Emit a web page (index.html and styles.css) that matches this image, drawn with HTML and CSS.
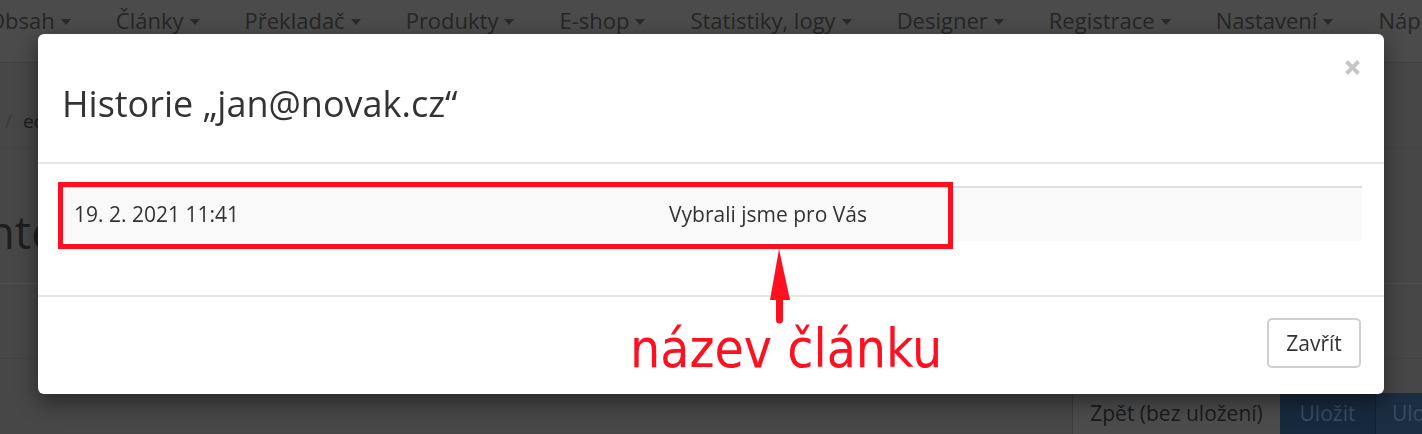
FILE: index.html
```html
<!DOCTYPE html>
<html lang="cs">
<head>
<meta charset="utf-8">
<title>Historie</title>
<link rel="stylesheet" href="styles.css">
</head>
<body>
<div class="page">
  <header class="topnav">
    <ul class="menu">
      <li class="menu-item">Obsah<span class="caret"></span></li>
      <li class="menu-item">Články<span class="caret"></span></li>
      <li class="menu-item">Překladač<span class="caret"></span></li>
      <li class="menu-item">Produkty<span class="caret"></span></li>
      <li class="menu-item">E-shop<span class="caret"></span></li>
      <li class="menu-item">Statistiky, logy<span class="caret"></span></li>
      <li class="menu-item">Designer<span class="caret"></span></li>
      <li class="menu-item">Registrace<span class="caret"></span></li>
      <li class="menu-item">Nastavení<span class="caret"></span></li>
      <li class="menu-item">Nápověda<span class="caret"></span></li>
    </ul>
  </header>
  <div class="crumbs"><span class="crumb-sep">/</span><span class="crumb">editace</span></div>
  <h1 class="heading">Content</h1>
  <div class="panel"></div>
  <div class="actionbar">
    <div class="actionbar-fill"></div>
    <button class="btn-back">Zpět (bez uložení)</button>
    <button class="btn-save">Uložit</button>
    <button class="btn-save btn-save-close">Uložit a zavřít</button>
  </div>
</div>

<div class="modal-layer">
  <div class="modal">
    <div class="modal-header">
      <h3 class="modal-title">Historie „jan@novak.cz“</h3>
      <button class="close" aria-label="Zavřít">
        <svg width="15" height="15" viewBox="0 0 15 15"><path d="M1.5 1.5 L13.5 13.5 M13.5 1.5 L1.5 13.5" stroke="#c6c6c6" stroke-width="4" fill="none"/></svg>
      </button>
    </div>
    <div class="modal-body">
      <div class="history">
        <div class="history-row">
          <div class="cell cell-date">19. 2. 2021 11:41</div>
          <div class="cell cell-title">Vybrali jsme pro Vás</div>
        </div>
      </div>
    </div>
    <div class="modal-footer">
      <button class="btn">Zavřít</button>
    </div>

    <div class="mark-box"></div>
    <svg class="mark-arrow" width="24" height="80" viewBox="0 0 24 80">
      <polygon points="11,2 2,53 22,53" fill="#ff1020"/>
      <line x1="11.5" y1="48" x2="11.5" y2="73" stroke="#ff1020" stroke-width="7" stroke-linecap="round"/>
    </svg>
    <div class="mark-label">název článku</div>
  </div>
</div>
</body>
</html>
```

FILE: styles.css
```css
html, body {
  margin: 0;
  padding: 0;
}

body {
  width: 1422px;
  height: 434px;
  overflow: hidden;
  background: #474747;
  font-family: "Open Sans", "Liberation Sans", sans-serif;
  color: #262626;
}

.page {
  display: flex;
  flex-direction: column;
  width: 1422px;
}

/* top navigation (dimmed behind the modal) */
.topnav {
  height: 62px;
  background: #4b4b4b;
  border-bottom: 1px solid #404040;
}

.menu {
  list-style: none;
  margin: 0 0 0 -12px;
  padding: 0;
  display: flex;
  gap: 45px;
  white-space: nowrap;
}

.menu-item {
  display: flex;
  align-items: center;
  font-size: 22px;
  line-height: 41px;
  color: #262626;
}

.caret {
  display: inline-block;
  margin-left: 6px;
  margin-top: 3px;
  width: 0;
  height: 0;
  border-top: 6px solid #2a2a2a;
  border-left: 5px solid transparent;
  border-right: 5px solid transparent;
}

.crumbs {
  display: flex;
  gap: 11px;
  padding: 46px 0 15px 5px;
  font-size: 19px;
  line-height: 24px;
  border-bottom: 1px solid #444444;
}

.crumb-sep {
  color: #3a3a3a;
}

.crumb {
  color: #1e1e1e;
}

.heading {
  margin: 0 0 0 -70px;
  padding: 52px 0 22px;
  font-size: 46px;
  line-height: 60px;
  font-weight: 400;
  color: #1e1e1e;
  border-bottom: 1px solid #525252;
}

.panel {
  height: 74px;
  border-bottom: 1px solid #434343;
}

.actionbar {
  margin-top: 34px;
  display: flex;
  height: 41px;
  width: 1560px;
}

.actionbar-fill {
  flex: 1;
}

.btn-back,
.btn-save {
  border: 0;
  margin: 0;
  font-family: "Open Sans", "Liberation Sans", sans-serif;
  font-size: 21px;
  height: 41px;
  line-height: 41px;
  padding: 0 16px;
}

.btn-back {
  background: #4c4c4c;
  color: #1b1b1b;
  border-left: 1px solid #3c3c3c;
  width: 208px;
}

.btn-save {
  background: #172a3d;
  color: #394c60;
  width: 95px;
}

.btn-save-close {
  width: 185px;
  background: #1b2d40;
  border-left: 1px solid #13212f;
  text-align: left;
}

/* modal */
.modal-layer {
  position: fixed;
  inset: 0;
}

.modal {
  position: relative;
  width: 1346px;
  margin: 34px auto 0;
  background: #ffffff;
  border-radius: 6px;
  box-shadow: 0 8px 22px rgba(0, 0, 0, 0.45);
  color: #333333;
}

.modal-header {
  display: flex;
  justify-content: space-between;
  padding: 50px 24px 38px;
  border-bottom: 2px solid #e6e6e6;
}

.modal-title {
  margin: 0;
  font-size: 36px;
  line-height: 40px;
  font-weight: 400;
  color: #333333;
}

.close {
  align-self: flex-start;
  margin-top: -24px;
  padding: 0;
  border: 0;
  background: none;
  width: 15px;
  height: 15px;
  display: flex;
}

.modal-body {
  padding: 22px 22px 24px 24px;
}

.history {
  border-top: 2px solid #dddddd;
  margin-bottom: 30px;
}

.history-row {
  display: flex;
  background: #f9f9f9;
}

.cell {
  padding: 12px;
  font-size: 21px;
  line-height: 29px;
  color: #333333;
}

.cell-date {
  width: 571px;
}

.modal-footer {
  display: flex;
  justify-content: flex-end;
  padding: 21px 23px 26px;
  border-top: 2px solid #e6e6e6;
}

.btn {
  height: 50px;
  width: 94px;
  border: 2px solid #cfcfcf;
  border-radius: 5px;
  background: #ffffff;
  font-family: "Open Sans", "Liberation Sans", sans-serif;
  font-size: 21px;
  color: #333333;
  padding: 0;
}

/* red annotation drawn over the modal */
.mark-box {
  position: absolute;
  left: 20px;
  top: 148px;
  width: 885px;
  height: 57px;
  border: 5px solid #ff1020;
}

.mark-arrow {
  position: absolute;
  left: 730px;
  top: 213px;
}

.mark-label {
  position: absolute;
  left: 592px;
  top: 289px;
  font-family: "DejaVu Sans Condensed", "DejaVu Sans", sans-serif;
  font-stretch: condensed;
  font-size: 53px;
  line-height: 52px;
  color: #ff1020;
  white-space: nowrap;
}
```
